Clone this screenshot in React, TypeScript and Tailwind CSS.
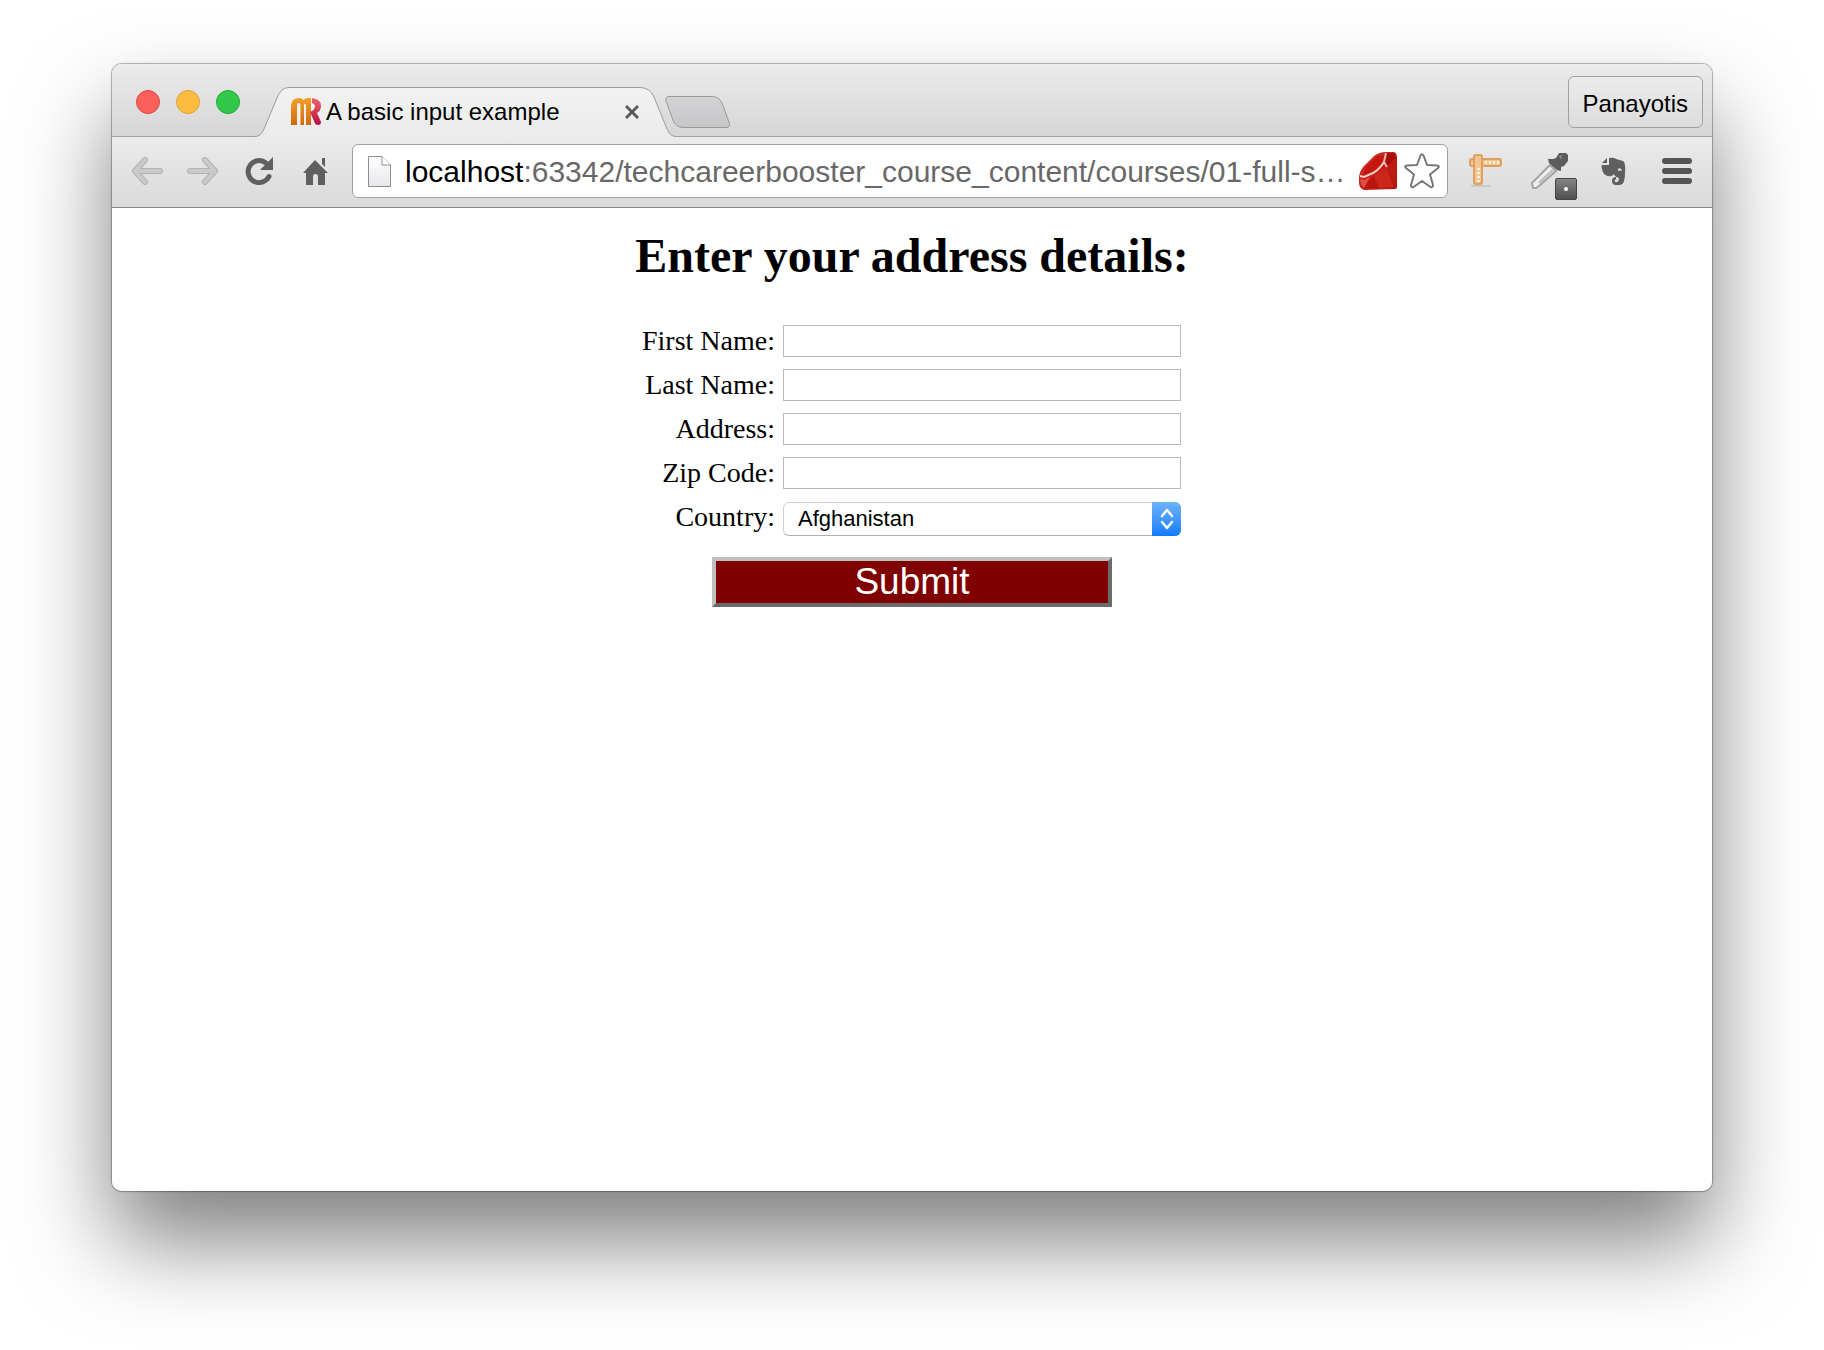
import React from "react";

const toolIcon = "shrink-0 overflow-visible";

function TitleBar() {
  return (
    <header className="flex h-[73px] items-end border-b border-[#a3a3a3] bg-linear-to-b from-[#ebebeb] to-[#d6d6d6]">
      <div className="flex gap-4 pb-[22px] pl-6">
        <button type="button" aria-label="Close window" className="size-6 rounded-full border border-[#e2463f] bg-[#fc605b]" />
        <button type="button" aria-label="Minimize window" className="size-6 rounded-full border border-[#e1a236] bg-[#fdbc40]" />
        <button type="button" aria-label="Zoom window" className="size-6 rounded-full border border-[#1dac35] bg-[#34c84a]" />
      </div>
      <div className="relative -mb-px ml-3 flex h-[50px] w-[424px] items-center pr-9 pl-[39px]">
        <svg className="absolute inset-0" width="424" height="50" viewBox="0 0 424 50" aria-hidden="true">
          <defs>
            <linearGradient id="tab" x1="0" y1="0" x2="0" y2="1">
              <stop offset="0" stopColor="#f2f2f2" />
              <stop offset="1" stopColor="#ebebeb" />
            </linearGradient>
          </defs>
          <path d="M0 49.500H3Q9 49.500 12 42L25 11Q29 0.500 37 0.500H388Q398 0.500 402 10L415 42Q418 49.500 424 49.500V50H0Z" fill="url(#tab)" />
          <path d="M0 49.500H3Q9 49.500 12 42L25 11Q29 0.500 37 0.500H388Q398 0.500 402 10L415 42Q418 49.500 424 49.500" fill="none" stroke="#9b9b9b" />
        </svg>
        <svg className="relative shrink-0" width="30" height="28" viewBox="0 0 30 28" aria-hidden="true">
          <defs>
            <linearGradient id="favM" x1="0" y1="0" x2="0" y2="1">
              <stop offset="0" stopColor="#f3a02b" />
              <stop offset="1" stopColor="#cf6a10" />
            </linearGradient>
            <linearGradient id="favR" x1="0" y1="0" x2="0" y2="1">
              <stop offset="0" stopColor="#ea6a6c" />
              <stop offset="1" stopColor="#b80d43" />
            </linearGradient>
          </defs>
          <path d="M0 27V9Q0 0 8 0Q11 0 12.500 2Q14 0 17 0H20V27H15V8Q15 5 13 6V27H9.500V8Q9.500 5 7.500 5Q6 5 6 8V27Z" fill="url(#favM)" />
          <path d="M21 0Q30 1 30 8Q30 13 26 15L30 24Q30 27 27 27Q24 27 23 23L19 14Q24 12 24 8Q24 6 21 5Z" fill="url(#favR)" />
        </svg>
        <span className="relative min-w-0 flex-1 truncate pl-[5px] text-2xl text-black">A basic input example</span>
        <button type="button" aria-label="Close tab" className="relative mr-px">
          <svg width="14" height="14" viewBox="0 0 14 14" fill="none" stroke="#5c5c5c" strokeWidth="3">
            <path d="M1 1L13 13M13 1L1 13" />
          </svg>
        </button>
      </div>
      <button type="button" aria-label="New tab" className="-ml-[11px] shrink-0 pb-2">
        <svg width="66" height="33" viewBox="0 0 66 33">
          <defs>
            <linearGradient id="newTab" x1="0" y1="0" x2="0" y2="1">
              <stop offset="0" stopColor="#d3d3d5" />
              <stop offset="1" stopColor="#c6c6c8" />
            </linearGradient>
          </defs>
          <path d="M4 1.500H47Q54 1.500 57 8L64 27Q66 32.500 61 32.500H18Q11 32.500 8 25L1 6Q0 1.500 4 1.500Z" fill="url(#newTab)" stroke="#999" />
        </svg>
      </button>
      <button type="button" className="mr-[9px] mb-2 ml-auto h-[52px] rounded-md border border-[#a0a0a0] bg-linear-to-b from-[#ececec] to-[#dcdcdc] px-3.5 pt-1 text-2xl text-black">
        Panayotis
      </button>
    </header>
  );
}

function Arrow({ flip }: { flip?: boolean }) {
  return (
    <svg className={flip ? "rotate-180" : ""} width="32" height="28" viewBox="0 0 32 28" fill="none" strokeLinecap="round" strokeLinejoin="round">
      <path d="M14 3L4 14L14 25M5 14H29" stroke="#b2b2b2" strokeWidth="6" />
      <path d="M14 3L4 14L14 25M5 14H29" stroke="#cacaca" strokeWidth="4" />
    </svg>
  );
}

function Ruby() {
  return (
    <svg className={toolIcon} width="38" height="38" viewBox="0 0 38 38" aria-hidden="true">
      <defs>
        <linearGradient id="rubyBody" x1="0" y1="0" x2="1" y2="1">
          <stop offset="0" stopColor="#d93a2c" />
          <stop offset="0.500" stopColor="#c51d13" />
          <stop offset="1" stopColor="#b3140c" />
        </linearGradient>
      </defs>
      <path d="M15 4Q20 0 27 0H35Q38 1 38 5V35Q38 37 35 37L5 38Q0 36 0 31V25Q1 18 5 14Z" fill="url(#rubyBody)" />
      <path d="M7 15L17 5L25 3L23 11L14 20L4 23Z" fill="#c3170f" />
      <path d="M27 1H35L37 6L28 14L25 10Z" fill="#a80e09" />
      <path d="M28 15L37 7V34Z" fill="#bd1a11" />
      <path d="M15 23L27 16L35 35L20 36Z" fill="#cb261c" />
      <path d="M14 23L19 36H7Z" fill="#b8150d" />
      <path d="M1 27L5 28L11 25L5 36L2 33Z" fill="#dd4f45" />
      <path d="M27 1L25 10L28 15" fill="none" stroke="#f3b4ac" strokeWidth="2" />
      <path d="M25 10Q20 18 14 21L5 25L1 24" fill="none" stroke="#f8d0cb" strokeWidth="2" />
    </svg>
  );
}

function ToolBar() {
  return (
    <nav className="flex h-[71px] items-center border-b border-[#858585] bg-linear-to-b from-[#ebebeb] to-[#dadada] pr-5 pb-0.5 pl-[19px]">
      <div className="flex shrink-0 items-center">
        <button type="button" aria-label="Back"><Arrow /></button>
        <button type="button" aria-label="Forward" className="ml-6"><Arrow flip /></button>
        <button type="button" aria-label="Reload" className="ml-[25px]">
          <svg width="32" height="28" viewBox="0 0 32 28" fill="none">
            <path d="M25 19.500A11 11 0 1 1 22 6" stroke="#5f5f5f" strokeWidth="5" strokeLinecap="round" />
            <path d="M29 0V13H16Z" fill="#5f5f5f" />
          </svg>
        </button>
        <button type="button" aria-label="Home" className="ml-[26px]">
          <svg width="28" height="28" viewBox="0 0 28 28" fill="#5f5f5f">
            <path d="M13 3L26 16H23V28H16V19Q16 17 13.500 17Q11 17 11 19V28H4V16H1Z" />
            <path d="M20 1H23V10L20 7Z" />
          </svg>
        </button>
      </div>
      <div className="ml-[22px] flex h-[54px] min-w-0 flex-1 items-center rounded-md border border-[#a0a0a0] bg-white pr-[7px] pl-[15px]">
        <svg className="shrink-0" width="23" height="31" viewBox="0 0 23 31" aria-hidden="true">
          <defs>
            <linearGradient id="sheet" x1="0" y1="0" x2="0" y2="1">
              <stop offset="0" stopColor="#fff" />
              <stop offset="1" stopColor="#e6e7ea" />
            </linearGradient>
          </defs>
          <path d="M0.500 0.500H14L22.500 9V30.500H0.500Z" fill="url(#sheet)" stroke="#8e8e8e" />
          <path d="M14 0.500V9H22.500" fill="#fff" stroke="#8e8e8e" />
        </svg>
        <div className="min-w-0 flex-1 overflow-hidden pt-0.5 pl-3.5 text-3xl leading-9 whitespace-nowrap text-[#686868]">
          <span className="text-black">localhost</span>:63342/techcareerbooster_course_content/courses/01-full-s…
        </div>
        <Ruby />
        <button type="button" aria-label="Bookmark this page" className="ml-[7px] shrink-0">
          <svg width="36" height="36" viewBox="0 0 36 36" fill="#fff" stroke="#777" strokeWidth="2" strokeLinejoin="round">
            <path d="M16.500 2.500Q18 0 19.500 2.500L23 12L33 12.500Q36 13 34 15L26 21.500L29 32Q29 35 26.500 34L18 28L9.500 34Q7 35 7 32L10 21.500L2 15Q0 13 3 12.500L13 12Z" />
          </svg>
        </button>
      </div>
      <div className="flex shrink-0 items-center pl-[21px]">
        <button type="button" aria-label="Page ruler">
          <svg className={toolIcon} width="34" height="34" viewBox="0 0 34 34">
            <path d="M2 32H22" stroke="#999" strokeWidth="2" opacity="0.300" />
            <rect x="1" y="5" width="31" height="7" rx="2" fill="#f4c592" stroke="#dd9f62" strokeWidth="2" />
            <rect x="5" y="1" width="8" height="29" rx="2" fill="#f4c592" stroke="#dd9f62" strokeWidth="2" />
            <path d="M17 7V10M21 7V10M25 7V10M29 7V10M8 15H11M8 19H11M8 23H11M8 27H11" stroke="#fff0d8" strokeWidth="2" />
          </svg>
        </button>
        <button type="button" aria-label="Color picker" className="relative ml-7">
          <svg className={toolIcon} width="38" height="38" viewBox="0 0 38 38">
            <path d="M2 36L1 31L19 13L25 19L8 34L5 36Z" fill="#efefef" stroke="#a3a3a3" strokeWidth="2" />
            <path d="M8 31L22 18" stroke="#c0c0c0" strokeWidth="3" />
            <path d="M17 7H22L25 6L28 1H35L37 3V9L33 14L30 15V19L26 18L18 11Z" fill="#5c5c5c" />
            <path d="M28 4L31 3L30 8Z" fill="#8a8a8a" />
          </svg>
          <span className="absolute -right-2 -bottom-2.5 flex size-[22px] items-center justify-center rounded-xs border border-[#444] bg-linear-to-b from-[#858585] to-[#505050]">
            <span className="size-1 rounded-full bg-white" />
          </span>
        </button>
        <button type="button" aria-label="Web clipper" className="ml-8">
          <svg className={toolIcon} width="25" height="29" viewBox="0 0 25 29">
            <path d="M8 1Q13 0 15 2L22 4Q25 6 24 16Q24 28 19 28H15Q11 28 11 24Q11 20 15 20V22Q13 23 14 25Q18 26 18 21Q14 20 13 17Q11 20 7 19Q2 18 1 12Q0 8 1 8H8Z" fill="#5f5f5f" />
            <path d="M1 6L6 1V6Z" fill="#5f5f5f" />
            <path d="M17 12Q20 10 21 14Q19 13 17 14Z" fill="#e2e2e2" />
          </svg>
        </button>
        <button type="button" aria-label="Menu" className="ml-9 flex flex-col gap-1">
          <span className="h-1.5 w-[30px] rounded-full bg-[#555]" />
          <span className="h-1.5 w-[30px] rounded-full bg-[#555]" />
          <span className="h-1.5 w-[30px] rounded-full bg-[#555]" />
        </button>
      </div>
    </nav>
  );
}

const fields = [
  { id: "first-name", label: "First Name:" },
  { id: "last-name", label: "Last Name:" },
  { id: "address", label: "Address:" },
  { id: "zip-code", label: "Zip Code:" },
];

function AddressForm() {
  return (
    <main className="flex flex-1 flex-col items-center pt-5 font-['Liberation_Serif',serif] text-black">
      <h1 className="text-center text-5xl leading-14 font-bold">Enter your address details:</h1>
      <form className="flex w-full max-w-[554px] flex-col px-2 pt-[35px]" onSubmit={(e) => e.preventDefault()}>
        {fields.map((f) => (
          <div key={f.id} className="-ml-2 flex h-11 items-center gap-2">
            <label htmlFor={f.id} className="flex-1 text-right text-[28px] leading-8 whitespace-nowrap">{f.label}</label>
            <input id={f.id} type="text" className="h-8 w-[398px] border border-[#b9b9b9] bg-white px-1 text-[22px] outline-none" />
          </div>
        ))}
        <div className="-ml-2 flex h-12 items-center gap-2">
          <label htmlFor="country" className="flex-1 pb-1 text-right text-[28px] leading-8 whitespace-nowrap">Country:</label>
          <div className="relative w-[398px]">
            <select id="country" className="block h-[34px] w-full appearance-none rounded-md border border-[#d0d0d0] border-b-[#b0b0b0] bg-white pl-3.5 font-['Liberation_Sans',sans-serif] text-[22px] leading-8 outline-none">
              <option>Afghanistan</option>
            </select>
            <span className="pointer-events-none absolute inset-y-0 right-0 flex w-[29px] items-center justify-center rounded-r-md bg-linear-to-b from-[#6cb3fa] to-[#0a7bff]">
              <svg width="14" height="22" viewBox="0 0 14 22" fill="none" stroke="#fff" strokeWidth="2.500" strokeLinecap="round" strokeLinejoin="round">
                <path d="M2 8L7 2L12 8M2 14L7 20L12 14" />
              </svg>
            </span>
          </div>
        </div>
        <button type="submit" className="mt-3.5 h-[50px] w-[400px] self-center border-4 border-t-[#c0c0c0] border-r-[#6b6b6b] border-b-[#6b6b6b] border-l-[#c0c0c0] bg-[#800000] font-['Liberation_Sans',sans-serif] text-[37px] leading-10 text-white">
          Submit
        </button>
      </form>
    </main>
  );
}

export default function App() {
  return (
    <div className="flex min-h-screen flex-col overflow-hidden bg-white px-28 pt-16 pb-[159px] font-['Liberation_Sans',sans-serif]">
      <div className="flex flex-1 flex-col rounded-[10px] shadow-[0_0_1px_1px_rgba(0,0,0,0.3),0_50px_90px_rgba(0,0,0,0.5)]">
        <div className="flex flex-1 flex-col overflow-hidden rounded-[10px] bg-white">
          <TitleBar />
          <ToolBar />
          <AddressForm />
        </div>
      </div>
    </div>
  );
}
